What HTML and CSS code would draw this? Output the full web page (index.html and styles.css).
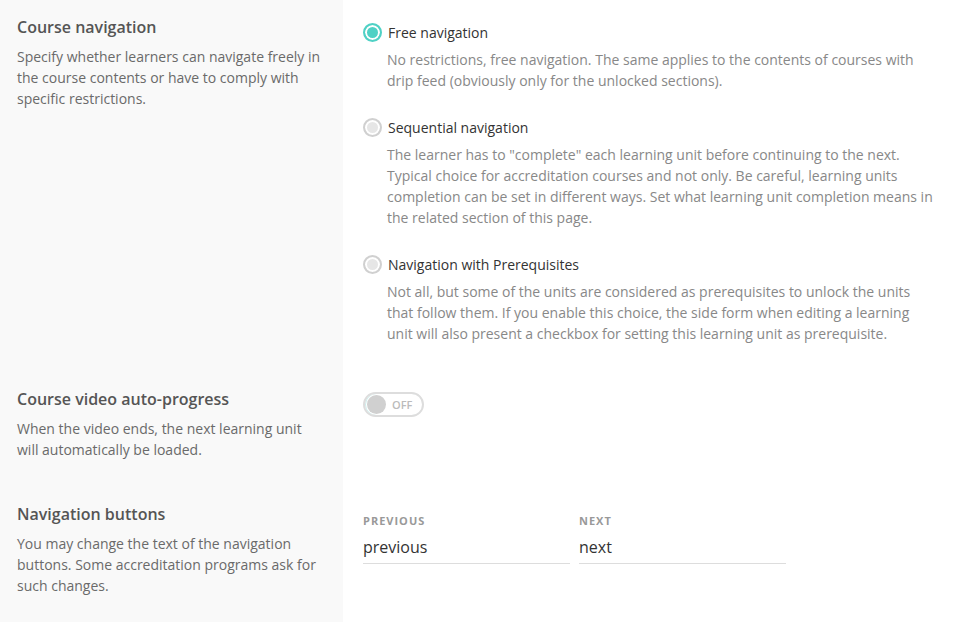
FILE: index.html
```html
<!DOCTYPE html>
<html>
<head>
<meta charset="utf-8">
<link rel="stylesheet" href="styles.css">
</head>
<body>
<div class="page">
  <section class="row row-nav">
    <div class="side">
      <h2 class="title">Course navigation</h2>
      <p class="desc">Specify whether learners can navigate freely in the course contents or have to comply with specific restrictions.</p>
    </div>
    <div class="main">
      <div class="option">
        <div class="opt-head"><span class="radio checked"></span><span class="opt-label">Free navigation</span></div>
        <p class="opt-desc">No restrictions, free navigation. The same applies to the contents of courses with drip feed (obviously only for the unlocked sections).</p>
      </div>
      <div class="option">
        <div class="opt-head"><span class="radio"></span><span class="opt-label">Sequential navigation</span></div>
        <p class="opt-desc">The learner has to "complete" each learning unit before continuing to the next. Typical choice for accreditation courses and not only. Be careful, learning units completion can be set in different ways. Set what learning unit completion means in the related section of this page.</p>
      </div>
      <div class="option">
        <div class="opt-head"><span class="radio"></span><span class="opt-label">Navigation with Prerequisites</span></div>
        <p class="opt-desc">Not all, but some of the units are considered as prerequisites to unlock the units that follow them. If you enable this choice, the side form when editing a learning unit will also present a checkbox for setting this learning unit as prerequisite.</p>
      </div>
    </div>
  </section>
  <section class="row row-video">
    <div class="side">
      <h2 class="title">Course video auto-progress</h2>
      <p class="desc">When the video ends, the next learning unit will automatically be loaded.</p>
    </div>
    <div class="main">
      <div class="toggle"><span class="knob"></span><span class="toggle-text">OFF</span></div>
    </div>
  </section>
  <section class="row row-buttons">
    <div class="side">
      <h2 class="title">Navigation buttons</h2>
      <p class="desc">You may change the text of the navigation buttons. Some accreditation programs ask for such changes.</p>
    </div>
    <div class="main fields">
      <label class="field"><span class="field-label">Previous</span><span class="field-input">previous</span></label>
      <label class="field"><span class="field-label">Next</span><span class="field-input">next</span></label>
    </div>
  </section>
</div>
</body>
</html>
```

FILE: styles.css
```css
* { box-sizing: border-box; }
html, body { margin: 0; padding: 0; }
body {
  font-family: "Open Sans", "Noto Sans", sans-serif;
  background: #fff;
  color: #333;
}
.page {
  display: flex;
  flex-direction: column;
  min-height: 100vh;
}
.row {
  display: grid;
  grid-template-columns: 343px 1fr;
}
.row-buttons { flex: 1; }
.side {
  background: #f9f9f9;
  padding: 16px 17px 0 17px;
}
.title {
  margin: 0;
  font-size: 16px;
  line-height: 22px;
  font-weight: 600;
  color: #555;
}
.desc {
  margin: 8px 0 0;
  font-size: 14px;
  line-height: 21px;
  color: #6a6a6a;
}
.main {
  padding: 21px 20px 0 20px;
}
.row-nav .main { padding-bottom: 28px; }
.option + .option { margin-top: 25px; }
.opt-head {
  display: flex;
  align-items: center;
  gap: 6px;
  height: 22px;
}
.radio {
  width: 19px;
  height: 19px;
  border-radius: 50%;
  border: 2px solid #d0d0d0;
  background: #e6e6e6;
  box-shadow: inset 0 0 0 2px #fff;
  flex: none;
}
.radio.checked {
  border-color: #4fd1c5;
  background: #4fd1c5;
  box-shadow: inset 0 0 0 2px #fff;
}
.opt-label {
  font-size: 14px;
  color: #333;
}
.opt-desc {
  margin: 6px 0 0 24px;
  font-size: 14px;
  line-height: 21px;
  color: #888;
}
.row-video .main { padding-top: 20px; padding-bottom: 27px; }
.row-video .side { padding-bottom: 27px; }
.toggle {
  width: 61px;
  height: 25px;
  border: 2px solid #ddd;
  border-radius: 13px;
  display: flex;
  align-items: center;
  padding: 0 2px;
  gap: 6px;
  box-shadow: inset 1px 0 0 #cdeeed;
}
.knob {
  width: 19px;
  height: 19px;
  border-radius: 50%;
  background: #d0d0d0;
}
.toggle-text {
  font-size: 11px;
  font-weight: 600;
  color: #bbb;
}
.fields {
  display: flex;
  gap: 9px;
  padding-top: 27px;
}
.field {
  width: 207px;
  display: flex;
  flex-direction: column;
}
.field-label {
  font-size: 11px;
  line-height: 13px;
  font-weight: 700;
  letter-spacing: 1px;
  text-transform: uppercase;
  color: #999;
}
.field-input {
  margin-top: 9px;
  font-size: 16px;
  line-height: 22px;
  padding-bottom: 5px;
  color: #333;
  border-bottom: 1px solid #ddd;
}
```
